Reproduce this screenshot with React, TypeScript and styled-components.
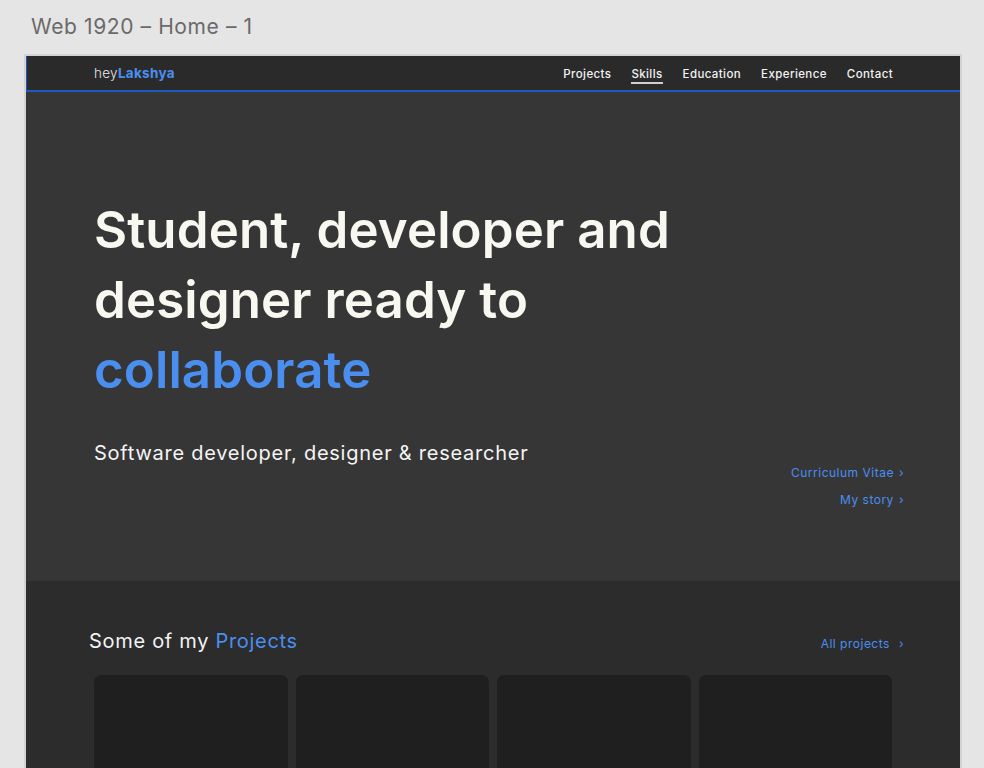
import React from "react";
import styled, { createGlobalStyle } from "styled-components";

const GlobalStyle = createGlobalStyle`
  html, body {
    margin: 0;
    padding: 0;
    background-color: #e5e5e5;
    overflow: hidden;
  }
  body {
    font-family: "Inter", "Liberation Sans", sans-serif;
  }
`;

const Canvas = styled.div`
  width: 984px;
  height: 768px;
  padding: 14px 0 0 24px;
  box-sizing: border-box;
  overflow: hidden;
`;

const FrameLabel = styled.div`
  font-family: "Inter", "Liberation Sans", sans-serif;
  font-size: 21px;
  letter-spacing: 0.6px;
  color: #6a6a6a;
  padding-left: 7px;
  height: 26px;
  line-height: 26px;
  margin-bottom: 14px;
`;

const Frame = styled.div`
  width: 938px;
  border: 2px solid #d3d3d3;
  box-sizing: border-box;
  font-family: "Inter", "Liberation Sans", sans-serif;
`;

const Navbar = styled.nav`
  height: 34px;
  background-color: #2a2a2a;
  border-bottom: 2px solid #1d59c0;
  border-left: 1px solid #1d59c0;
  display: flex;
  align-items: center;
  justify-content: space-between;
  padding: 0 67px 0 67px;
`;

const Logo = styled.div`
  font-size: 13.5px;
  color: #e8e8e8;
  letter-spacing: 0.3px;
  font-weight: 300;
  margin-top: -1px;

  b {
    color: #4a8ff0;
    font-weight: 700;
  }
`;

const NavList = styled.div`
  display: flex;
  gap: 20px;
  margin-top: 5px;
`;

const NavItem = styled.span<{ $active?: boolean }>`
  font-size: 11.5px;
  color: #f3f3f3;
  font-weight: 500;
  letter-spacing: 0.4px;
  padding-bottom: 1px;
  border-bottom: 2px solid ${(p) => (p.$active ? "#cfcfcf" : "transparent")};
`;

const Hero = styled.section`
  height: 489px;
  background-color: #363636;
  padding: 0 56px 0 68px;
  display: flex;
  flex-direction: column;
`;

const Headline = styled.h1`
  margin: 103px 0 0;
  font-size: 51px;
  line-height: 70px;
  font-weight: 600;
  letter-spacing: 0.1px;
  color: #f8f8f0;
`;

const Accent = styled.span`
  color: #4a8ff0;
`;

const HeroFooter = styled.div`
  display: flex;
  justify-content: space-between;
  align-items: flex-start;
  margin-top: 36px;
`;

const Subtitle = styled.p`
  margin: 0;
  font-size: 20px;
  color: #f4f4f4;
  letter-spacing: 0.75px;
`;

const LinkColumn = styled.div`
  display: flex;
  flex-direction: column;
  align-items: flex-end;
  gap: 10px;
  margin-top: 23px;
`;

const TextLink = styled.a<{ $wide?: boolean }>`
  font-size: 12px;
  color: #4a8ff0;
  letter-spacing: 0.5px;
  text-decoration: none;
  line-height: 17px;

  span {
    margin-left: ${(p) => (p.$wide ? "9px" : "5px")};
  }
`;

const Projects = styled.section`
  background-color: #2c2c2c;
  padding: 48px 56px 0 63px;
  height: 300px;
`;

const SectionHeader = styled.div`
  display: flex;
  justify-content: space-between;
  align-items: center;

  ${TextLink} {
    margin-top: 5px;
  }
`;

const SectionTitle = styled.h2`
  margin: 0;
  font-size: 20px;
  font-weight: 400;
  letter-spacing: 0.7px;
  color: #f4f4f4;
`;

const CardGrid = styled.div`
  display: grid;
  grid-template-columns: repeat(4, 1fr);
  gap: 8px;
  margin: 22px 12px 0 5px;
`;

const Card = styled.div`
  height: 220px;
  background-color: #1f1f1f;
  border-radius: 7px;
`;

const App = () => {
  return (
    <Canvas>
      <GlobalStyle />
      <FrameLabel>Web 1920 – Home – 1</FrameLabel>
      <Frame>
        <Navbar>
          <Logo>
            hey<b>Lakshya</b>
          </Logo>
          <NavList>
            <NavItem>Projects</NavItem>
            <NavItem $active>Skills</NavItem>
            <NavItem>Education</NavItem>
            <NavItem>Experience</NavItem>
            <NavItem>Contact</NavItem>
          </NavList>
        </Navbar>

        <Hero>
          <Headline>
            Student, developer and
            <br />
            designer ready to
            <br />
            <Accent>collaborate</Accent>
          </Headline>
          <HeroFooter>
            <Subtitle>Software developer, designer &amp; researcher</Subtitle>
            <LinkColumn>
              <TextLink href="#">
                Curriculum Vitae<span>›</span>
              </TextLink>
              <TextLink href="#">
                My story<span>›</span>
              </TextLink>
            </LinkColumn>
          </HeroFooter>
        </Hero>

        <Projects>
          <SectionHeader>
            <SectionTitle>
              Some of my <Accent>Projects</Accent>
            </SectionTitle>
            <TextLink href="#" $wide>
              All projects<span>›</span>
            </TextLink>
          </SectionHeader>
          <CardGrid>
            <Card />
            <Card />
            <Card />
            <Card />
          </CardGrid>
        </Projects>
      </Frame>
    </Canvas>
  );
};

export default App;
